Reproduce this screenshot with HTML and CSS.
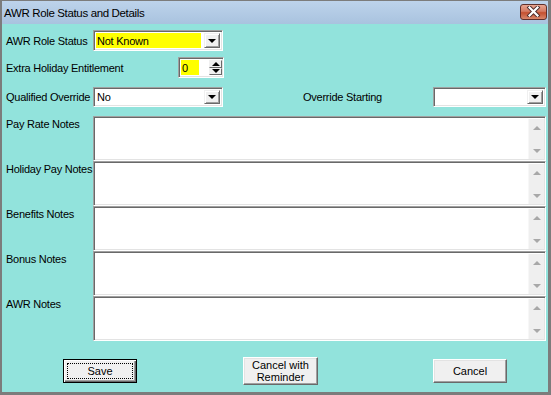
FILE: index.html
```html
<!DOCTYPE html>
<html>
<head>
  <meta http-equiv="content-type" content="text/html; charset=utf-8" />
  <title>AWR Role Status and Details</title>
  <link rel="stylesheet" href="styles.css">
</head>
<body>
  <div class="window">
    <div class="titlebar">
      <span class="title">AWR Role Status and Details</span>
      <span class="close">
        <svg width="17" height="11" viewBox="0 0 17 11">
          <path d="M4.5 1.5 L12.5 9.5 M12.5 1.5 L4.5 9.5" stroke="#4a2a2a" stroke-width="4" stroke-linecap="square"/>
          <path d="M4.5 1.5 L12.5 9.5 M12.5 1.5 L4.5 9.5" stroke="#ffffff" stroke-width="2.2" stroke-linecap="square"/>
        </svg>
      </span>
    </div>

    <div class="content">
      <div class="row row-status">
        <label class="lbl">AWR Role Status</label>
        <div class="combo combo-status">
          <span class="val hilite">Not Known</span>
          <span class="drop"><i class="tri-down"></i></span>
        </div>
      </div>

      <div class="row row-extra">
        <label class="lbl lbl-wide">Extra Holiday Entitlement</label>
        <div class="spin">
          <span class="val hilite spin-val">0</span>
          <span class="spin-btns">
            <span class="spin-btn"><i class="tri-up"></i></span>
            <span class="spin-btn"><i class="tri-down"></i></span>
          </span>
        </div>
      </div>

      <div class="row row-override">
        <label class="lbl">Qualified Override</label>
        <div class="combo combo-qual">
          <span class="val">No</span>
          <span class="drop"><i class="tri-down"></i></span>
        </div>
        <label class="lbl-start">Override Starting</label>
        <div class="combo combo-start">
          <span class="val"></span>
          <span class="drop"><i class="tri-down"></i></span>
        </div>
      </div>

      <div class="notes">
        <div class="note">
          <label class="lbl note-lbl">Pay Rate Notes</label>
          <div class="memo"><div class="memo-text"></div><div class="vscroll"><i class="arr-up"></i><i class="arr-down"></i></div></div>
        </div>
        <div class="note">
          <label class="lbl note-lbl">Holiday Pay Notes</label>
          <div class="memo"><div class="memo-text"></div><div class="vscroll"><i class="arr-up"></i><i class="arr-down"></i></div></div>
        </div>
        <div class="note">
          <label class="lbl note-lbl">Benefits Notes</label>
          <div class="memo"><div class="memo-text"></div><div class="vscroll"><i class="arr-up"></i><i class="arr-down"></i></div></div>
        </div>
        <div class="note">
          <label class="lbl note-lbl">Bonus Notes</label>
          <div class="memo"><div class="memo-text"></div><div class="vscroll"><i class="arr-up"></i><i class="arr-down"></i></div></div>
        </div>
        <div class="note">
          <label class="lbl note-lbl">AWR Notes</label>
          <div class="memo"><div class="memo-text"></div><div class="vscroll"><i class="arr-up"></i><i class="arr-down"></i></div></div>
        </div>
      </div>

      <div class="buttons">
        <button class="btn btn-default"><span class="focus">Save</span></button>
        <button class="btn btn-remind">Cancel with<br>Reminder</button>
        <button class="btn btn-cancel">Cancel</button>
      </div>
    </div>
  </div>
</body>
</html>
```

FILE: styles.css
```css
body {
  margin: 0;
  background: #ffffff;
}
.window {
  width: 551px;
  height: 395px;
  box-sizing: border-box;
  border-left: 2px solid #7c7c7c;
  border-right: 3px solid #7c7c7c;
  border-bottom: 3px solid #7c7c7c;
  border-top: 1px solid #7c7c7c;
  background: #92e3dc;
  font-family: "Liberation Sans", Arial, sans-serif;
  font-size: 11px;
  letter-spacing: -0.25px;
  color: #000;
  display: flex;
  flex-direction: column;
}
.titlebar {
  height: 23px;
  background: linear-gradient(#bdd3eb, #a9c3df);
  display: flex;
  align-items: center;
  justify-content: space-between;
  padding-left: 2px;
  padding-right: 1px;
}
.title {
  font-family: "Liberation Sans", Arial, sans-serif;
  font-size: 11.5px;
  letter-spacing: -0.35px;
  color: #000;
  margin-top: 1px;
}
.close {
  width: 27px;
  height: 16px;
  box-sizing: border-box;
  margin-top: -2px;
  border: 1px solid #5e2f2b;
  border-radius: 3px;
  background: linear-gradient(#e8a591 0%, #d47a62 45%, #c4502f 55%, #d8876b 100%);
  display: flex;
  align-items: center;
  justify-content: center;
}
.close svg {
  display: block;
}

.content {
  padding-left: 4px;
  padding-top: 6px;
}
.row {
  display: flex;
  align-items: center;
}
.lbl {
  width: 87px;
  flex: none;
  white-space: nowrap;
}
.lbl-wide {
  width: 172px;
}
.row-extra {
  margin-top: 6px;
}
.row-override {
  margin-top: 9px;
}

/* sunken 3d field */
.combo, .spin, .memo {
  box-sizing: border-box;
  border: 1px solid;
  border-color: #a0a0a0 #ffffff #ffffff #a0a0a0;
  box-shadow: inset 1px 1px 0 #696969, inset -1px -1px 0 #e3e3e3;
  background: #fff;
}
.combo {
  height: 21px;
  display: flex;
  align-items: stretch;
  padding: 2px;
}
.combo-status {
  width: 130px;
}
.combo-qual {
  width: 130px;
  height: 20px;
}
.combo-start {
  width: 113px;
  height: 20px;
}
.val {
  flex: 1;
  display: flex;
  align-items: center;
  padding-left: 1px;
  white-space: nowrap;
}
.hilite {
  background: #ffff00;
}
.combo-status .val {
  margin-right: 3px;
}
.drop {
  width: 16px;
  flex: none;
  box-sizing: border-box;
  background: #f0f0f0;
  border: 1px solid;
  border-color: #f0f0f0 #696969 #696969 #f0f0f0;
  box-shadow: inset 1px 1px 0 #ffffff, inset -1px -1px 0 #a0a0a0;
  display: flex;
  align-items: center;
  justify-content: center;
}
.tri-down, .tri-up {
  display: block;
  width: 0;
  height: 0;
  border-left: 4px solid transparent;
  border-right: 4px solid transparent;
}
.tri-down {
  border-top: 4px solid #000;
}
.tri-up {
  border-bottom: 4px solid #000;
}
.lbl-start {
  margin-left: 80px;
  width: 130px;
  flex: none;
}

.spin {
  width: 46px;
  height: 21px;
  display: flex;
  padding: 2px 1px 2px 2px;
}
.spin-val {
  flex: none;
  width: 17px;
  margin-right: 10px;
}
.spin-btns {
  width: 16px;
  display: flex;
  flex-direction: column;
}
.spin-btn {
  flex: 1;
  box-sizing: border-box;
  background: #f0f0f0;
  border: 1px solid;
  border-color: #f0f0f0 #696969 #696969 #f0f0f0;
  display: flex;
  align-items: center;
  justify-content: center;
}

.notes {
  margin-top: 9px;
  display: flex;
  flex-direction: column;
}
.note {
  display: flex;
  align-items: flex-start;
}
.note-lbl {
  padding-top: 2px;
}
.memo {
  width: 453px;
  height: 45px;
  display: flex;
  padding: 2px 1px 1px 2px;
}
.memo-text {
  flex: 1;
}
.vscroll {
  width: 16px;
  background: #efefef;
  border-left: 1px solid #f7f7f7;
  display: flex;
  flex-direction: column;
  justify-content: space-between;
  align-items: center;
  padding: 7px 0 6px;
  box-sizing: border-box;
}
.arr-up, .arr-down {
  display: block;
  width: 0;
  height: 0;
  border-left: 4px solid transparent;
  border-right: 4px solid transparent;
}
.arr-up {
  border-bottom: 4px solid #a8a8a8;
}
.arr-down {
  border-top: 4px solid #a8a8a8;
}

.buttons {
  margin-top: 16px;
  padding-left: 57px;
  display: flex;
  align-items: center;
}
.btn {
  box-sizing: border-box;
  font-family: "Liberation Sans", Arial, sans-serif;
  font-size: 11px;
  color: #000;
  background: #f0f0f0;
  border: 1px solid;
  border-color: #ffffff #696969 #696969 #ffffff;
  box-shadow: inset -1px -1px 0 #a0a0a0, inset 1px 1px 0 #e3e3e3;
  padding: 0;
  line-height: 12px;
}
.btn-default {
  width: 74px;
  height: 24px;
  border: 1px solid #000;
  box-shadow: inset 1px 1px 0 #ffffff, inset -1px -1px 0 #696969, inset -2px -2px 0 #a0a0a0;
  padding: 3px;
  display: flex;
}
.focus {
  flex: 1;
  border: 1px dotted #000;
  display: flex;
  align-items: center;
  justify-content: center;
}
.btn-remind {
  width: 75px;
  height: 28px;
  margin-left: 106px;
}
.btn-cancel {
  width: 74px;
  height: 24px;
  margin-left: 115px;
}
```
